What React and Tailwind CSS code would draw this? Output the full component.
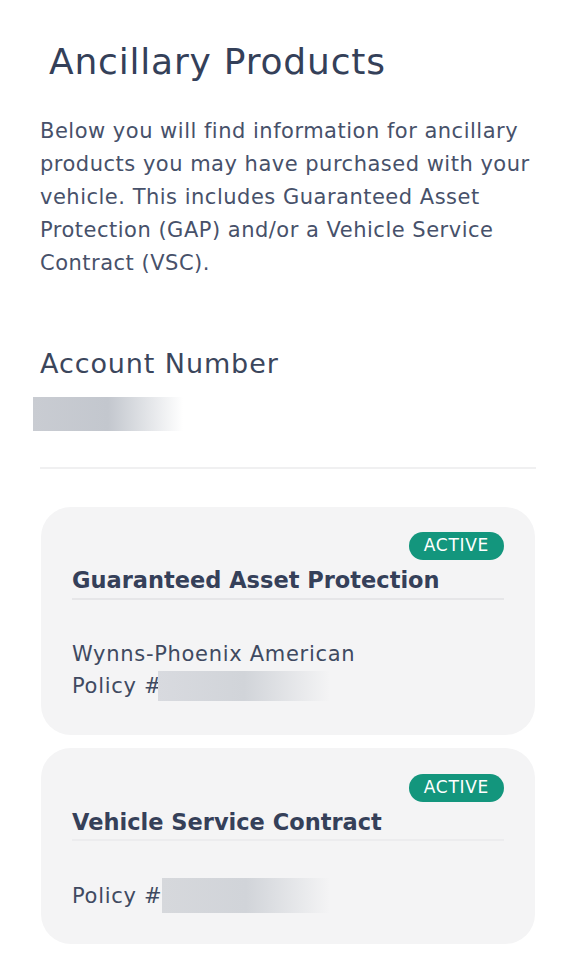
export default function App() {
  const font = { fontFamily: '"DejaVu Sans", "Noto Sans", sans-serif' };
  return (
    <div className="min-h-screen bg-white text-[#3b465c]" style={font}>
      <div className="pl-[40px] pr-[29px] pt-[37px] pb-[36px]">
        <h1 className="pl-[9px] text-[36px] leading-[50px] font-normal text-[#344059] tracking-[0.8px]">Ancillary Products</h1>
        <p className="mt-[28px] text-[21px] leading-[33px] text-[#47516a] tracking-[0.5px]">
          Below you will find information for ancillary products you may have purchased with your vehicle. This includes Guaranteed Asset Protection (GAP) and/or a Vehicle Service Contract (VSC).
        </p>
        <h2 className="mt-[65px] text-[27px] leading-[38px] text-[#3b465c] tracking-[0.9px]">Account Number</h2>
        <div className="mt-[14px] -ml-[7px] h-[34px] w-[150px] bg-gradient-to-r from-[#c9ccd2] via-[#c3c7ce] to-white"></div>
        <div className="mt-[36px] h-[2px] bg-[#f0f0f1]"></div>
        <div className="mt-[38px] flex flex-col gap-[13px] px-[1px]">
          <div className="rounded-[30px] bg-[#f4f4f5] px-[31px] pt-[25px] pb-[33px]">
            <div className="flex justify-end">
              <span className="rounded-full bg-[#13967d] px-[15px] h-[28px] flex items-center text-[17px] tracking-[0.7px] text-white">ACTIVE</span>
            </div>
            <div className="mt-[4px] text-[22.5px] leading-[32px] font-bold text-[#354059]">Guaranteed Asset Protection</div>
            <div className="mt-[2px] h-[2px] bg-[#e6e6e8]"></div>
            <div className="mt-[38px] text-[21px] leading-[32px] text-[#3f4a61] tracking-[0.7px]">Wynns-Phoenix American</div>
            <div className="flex items-center text-[21px] leading-[32px] text-[#3f4a61] tracking-[0.7px]">
              <span>Policy #</span>
              <span className="-ml-[4px] h-[30px] w-[172px] bg-gradient-to-r from-[#d8dadf] via-[#d1d4d9] to-[#f4f4f5]"></span>
            </div>
          </div>
          <div className="rounded-[30px] bg-[#f4f4f5] px-[31px] pt-[26px] pb-[31px]">
            <div className="flex justify-end">
              <span className="rounded-full bg-[#13967d] px-[15px] h-[28px] flex items-center text-[17px] tracking-[0.7px] text-white">ACTIVE</span>
            </div>
            <div className="mt-[4px] text-[22.5px] leading-[32px] font-bold text-[#354059]">Vehicle Service Contract</div>
            <div className="mt-[1px] h-[2px] bg-[#ececee]"></div>
            <div className="mt-[37px] flex items-center text-[21px] leading-[32px] text-[#3f4a61] tracking-[0.7px]">
              <span>Policy #</span>
              <span className="ml-[0px] h-[35px] w-[168px] bg-gradient-to-r from-[#d6d8dc] via-[#d1d4d9] to-[#f4f4f5]"></span>
            </div>
          </div>
        </div>
      </div>
    </div>
  );
}
